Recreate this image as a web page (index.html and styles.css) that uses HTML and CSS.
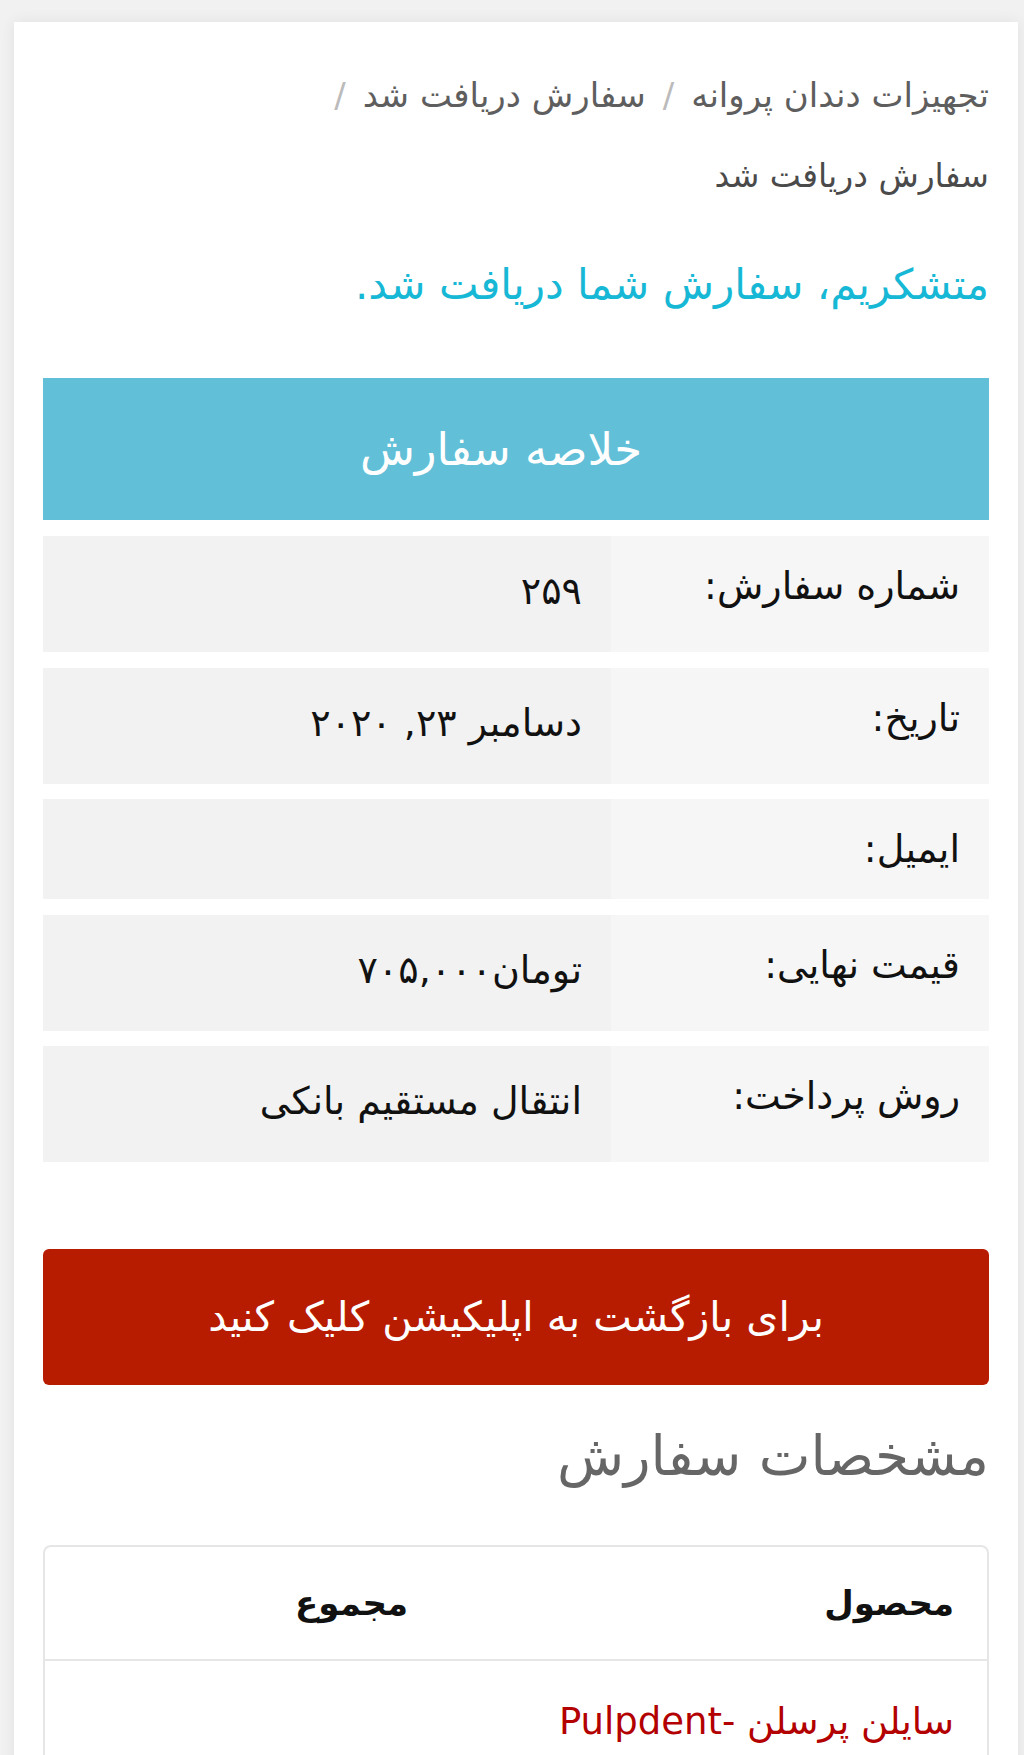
FILE: index.html
```html
<!DOCTYPE html>
<html lang="fa" dir="rtl">
<head>
<meta charset="utf-8">
<title>سفارش دریافت شد</title>
<link rel="stylesheet" href="styles.css">
</head>
<body>
<div class="card">
  <nav class="breadcrumb">
    <span class="crumb">تجهیزات دندان پروانه</span><span class="sep">/</span><span class="crumb">سفارش دریافت شد</span><span class="sep">/</span>
  </nav>
  <h1 class="page-title">سفارش دریافت شد</h1>
  <p class="thanks">متشکریم، سفارش شما دریافت شد.</p>

  <div class="summary-head">خلاصه سفارش</div>
  <div class="summary">
    <div class="row"><div class="label">شماره سفارش:</div><div class="value">۲۵۹</div></div>
    <div class="row"><div class="label">تاریخ:</div><div class="value">دسامبر ۲۳, ۲۰۲۰</div></div>
    <div class="row"><div class="label">ایمیل:</div><div class="value empty"></div></div>
    <div class="row"><div class="label">قیمت نهایی:</div><div class="value">تومان۷۰۵,۰۰۰</div></div>
    <div class="row"><div class="label">روش پرداخت:</div><div class="value">انتقال مستقیم بانکی</div></div>
  </div>

  <a class="back-btn" href="#">برای بازگشت به اپلیکیشن کلیک کنید</a>

  <h2 class="details-title">مشخصات سفارش</h2>
  <div class="details">
    <div class="details-head">
      <div class="col-product">محصول</div>
      <div class="col-total">مجموع</div>
    </div>
    <div class="details-row">
      <div class="col-product"><a class="product-link" href="#">سایلن پرسلن -Pulpdent</a></div>
      <div class="col-total"></div>
    </div>
  </div>
</div>
</body>
</html>
```

FILE: styles.css
```css
html, body {
  margin: 0;
  padding: 0;
}
body {
  background: #f1f1f1;
  font-family: "DejaVu Sans", sans-serif;
  direction: rtl;
  padding-top: 22px;
}
.card {
  margin: 0 6px 0 14px;
  min-height: 1800px;
  box-sizing: border-box;
  background: #fff;
  padding: 53px 29px 0 29px;
  box-shadow: 0 0 14px rgba(0, 0, 0, 0.07);
}
.breadcrumb {
  font-size: 34px;
  line-height: 40px;
  color: #5e5e5e;
}
.breadcrumb .sep {
  color: #bbb;
  margin: 0 17px;
}
.page-title {
  margin: 41px 0 0 0;
  font-size: 33px;
  line-height: 40px;
  font-weight: normal;
  color: #4a4a4a;
}
.thanks {
  margin: 64px 0 0 0;
  font-size: 42px;
  line-height: 50px;
  color: #17b8d5;
}
.summary-head {
  margin-top: 68px;
  height: 142px;
  box-sizing: border-box;
  padding-right: 30px;
  background: #62bfd8;
  color: #fff;
  font-size: 45px;
  display: flex;
  align-items: center;
  justify-content: center;
}
.summary {
  display: flex;
  flex-direction: column;
  gap: 15.5px;
  margin-top: 16px;
}
.row {
  display: flex;
  font-size: 38px;
  line-height: 38px;
  color: #111;
}
.label {
  width: 378px;
  box-sizing: border-box;
  background: #f6f6f6;
  padding: 31px 29px 31px 10px;
}
.value {
  flex: 1;
  background: #f2f2f2;
  padding: 36px 29px 42px 10px;
}
.value.empty {
  padding: 0;
}
.back-btn {
  display: flex;
  align-items: center;
  justify-content: center;
  margin-top: 87px;
  height: 136px;
  border-radius: 6px;
  background: #b81c00;
  color: #fff;
  font-size: 41px;
  text-decoration: none;
}
.details-title {
  margin: 41px 0 0 0;
  font-size: 55px;
  line-height: 60px;
  font-weight: normal;
  color: #666;
}
.details {
  margin-top: 59px;
  border: 2px solid #e6e6e6;
  border-radius: 8px;
}
.details-head,
.details-row {
  display: flex;
}
.details-head {
  height: 112px;
  align-items: center;
  border-bottom: 2px solid #e6e6e6;
  font-weight: bold;
  font-size: 34px;
  color: #111;
}
.details-row {
  height: 120px;
  align-items: center;
  font-size: 37px;
}
.col-product {
  width: 546px;
  box-sizing: border-box;
  padding-right: 33px;
}
.col-total {
  flex: 1;
  padding-right: 33px;
}
.product-link {
  color: #b30000;
  text-decoration: none;
}
```
